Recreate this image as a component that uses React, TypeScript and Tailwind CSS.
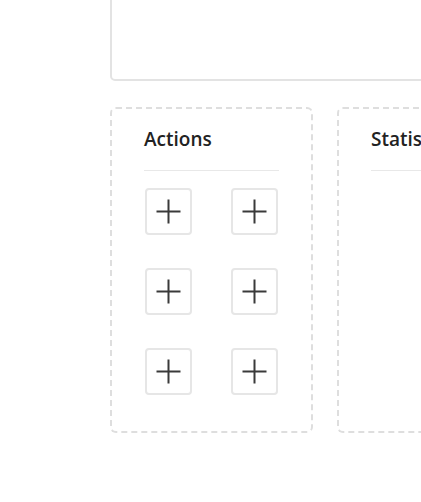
import React from "react";

function PlusButton() {
  return (
    <button className="flex h-[47px] w-[47px] items-center justify-center rounded-[4px] border-2 border-[#e6e6e6] bg-white">
      <svg width="25" height="25" viewBox="0 0 25 25" fill="none">
        <path d="M12.5 0.5v24M0.5 12.5h24" stroke="#3a3a3a" strokeWidth="2" />
      </svg>
    </button>
  );
}

function Card({ title, children }: { title: string; children?: React.ReactNode }) {
  return (
    <div className="h-[326px] w-[203px] shrink-0 rounded-[6px] border-2 border-dashed border-[#dedede] px-[32px] pt-[17px]">
      <div className="whitespace-nowrap border-b border-[#e8e8e8] pb-[18px] text-[19px] font-semibold leading-[26px] text-[#222]">
        {title}
      </div>
      {children}
    </div>
  );
}

export default function App() {
  return (
    <div
      className="h-[502px] w-[421px] overflow-hidden bg-white pl-[110px]"
      style={{ fontFamily: "'Open Sans', 'Noto Sans', sans-serif" }}
    >
      <div className="-mt-[20px] h-[101px] w-[400px] rounded-[5px] border-2 border-[#e3e3e3]" />
      <div className="mt-[26px] flex gap-[24px]">
        <Card title="Actions">
          <div className="mt-[17px] grid grid-cols-2 gap-y-[33px] px-[1px]">
            <div><PlusButton /></div>
            <div className="flex justify-end"><PlusButton /></div>
            <div><PlusButton /></div>
            <div className="flex justify-end"><PlusButton /></div>
            <div><PlusButton /></div>
            <div className="flex justify-end"><PlusButton /></div>
          </div>
        </Card>
        <Card title="Statistics" />
      </div>
    </div>
  );
}
